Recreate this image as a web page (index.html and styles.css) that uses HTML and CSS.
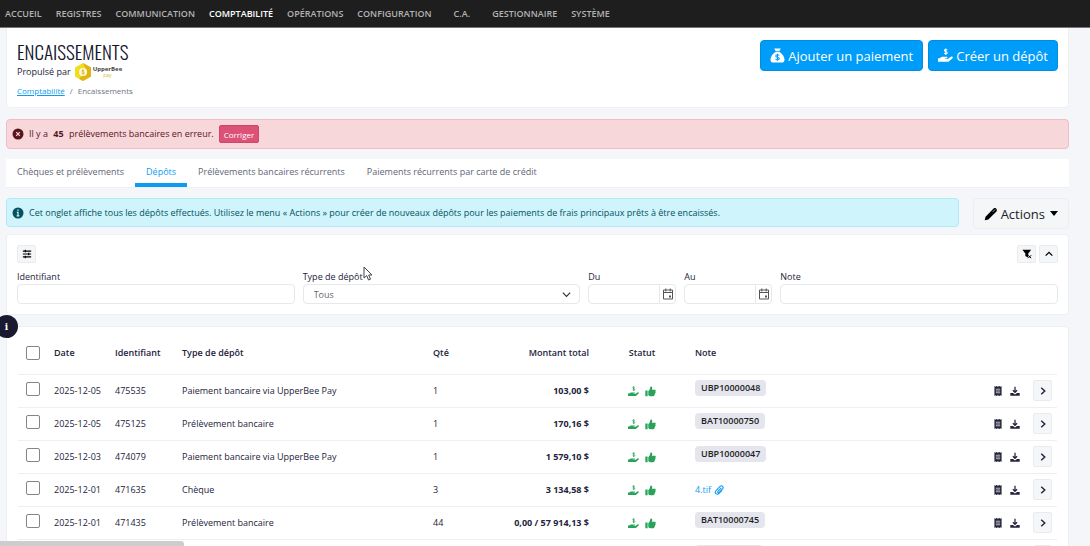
FILE: index.html
```html
<!DOCTYPE html>
<html lang="fr">
<head>
    <meta charset="UTF-8">
    <meta name="viewport" content="width=device-width, initial-scale=1.0">
    <title>Encaissements</title>
    <link rel="stylesheet" href="styles.css">
</head>
<body>

    <!-- Icons -->
    <svg class="sprite" aria-hidden="true">
        <symbol id="i-bag" viewBox="0 0 16 16">
            <path d="M4.5.5h7L9.900 3.400H6.100zM5.800 4.200h4.400C13 6 15.500 9 15.500 12.400c0 2-1.200 3.100-3.100 3.100H3.600C1.700 15.500.5 14.400.5 12.400.5 9 3 6 5.800 4.200z" fill="currentColor"/>
            <path d="M9.900 8C9.500 7.300 8.800 7.100 8 7.100c-1.100 0-1.900.5-1.900 1.300 0 2 3.900.9 3.900 2.900 0 .9-.9 1.400-2 1.400-.9 0-1.700-.3-2-1.100M8 6.100v7.600" fill="none" stroke="#009cf9" stroke-width="1.100"/>
        </symbol>
        <symbol id="i-hand" viewBox="0 0 16 16">
            <path d="M0 11h1.800l1.600-1.200c.5-.4 1-.5 1.600-.5h4.200c1.400 0 1.400 1.800 0 1.800H7.200v.5h3.300l3.300-2.300c1.300-.8 2.600.5 1.700 1.600l-3.700 3.300c-.4.4-.9.500-1.500.5H0z" fill="currentColor"/>
            <path d="M9.800 2.300C9.400 1.700 8.900 1.500 8.300 1.500c-.9 0-1.500.4-1.500 1.100 0 1.600 3.100.8 3.100 2.400 0 .8-.7 1.200-1.600 1.200-.8 0-1.300-.3-1.600-.9M8.300.4v7" fill="none" stroke="currentColor" stroke-width="1.100"/>
        </symbol>
        <symbol id="i-thumb" viewBox="0 0 16 16">
            <path d="M.5 6.500h3.300v8.500H.5zM4.800 7.200c1.500-.8 2.500-2.500 2.700-4.800C7.600 1.200 8.300.7 9 .9c1.300.3 1.700 1.700 1.400 3l-.4 1.700h3.900c2 0 2.200 2.100 1 2.700.9.8.6 2-.4 2.400.5.900 0 1.800-.8 2 .3 1.300-.5 2.100-1.700 2.100H8.400c-1.500 0-2.500-.8-3.600-1.400z" fill="currentColor"/>
        </symbol>
        <symbol id="i-receipt" viewBox="0 0 12 14">
            <path d="M1 0l1.500 1L4 0l2 1 2-1 1.500 1L11 0v14l-1.500-1L8 14l-2-1-2 1-1.500-1L1 14z" fill="currentColor"/>
            <path d="M3 4.500h6M3 7h6M3 9.500h6" stroke="#fff" stroke-width="1"/>
        </symbol>
        <symbol id="i-download" viewBox="0 0 16 16">
            <path d="M8 1v9M4.600 6.800L8 10.200l3.400-3.400" fill="none" stroke="currentColor" stroke-width="2"/>
            <path d="M.5 11h4.300L8 13.500l3.200-2.500h4.300v4.500H.5z" fill="currentColor"/>
        </symbol>
        <symbol id="i-right" viewBox="0 0 10 14">
            <path d="M2.500 2.500L7.500 7l-5 4.500" fill="none" stroke="currentColor" stroke-width="2"/>
        </symbol>
        <symbol id="i-up" viewBox="0 0 12 12">
            <path d="M2 8l4-4 4 4" fill="none" stroke="currentColor" stroke-width="1.500"/>
        </symbol>
        <symbol id="i-sliders" viewBox="0 0 12 12">
            <path d="M1 2.500h10M1 6h10M1 9.500h10M4 1v3M8 4.500v3M4 8v3" fill="none" stroke="currentColor" stroke-width="1.400"/>
        </symbol>
        <symbol id="i-filter" viewBox="0 0 12 12">
            <path d="M.5 1h10.500L7.500 5.500V10.500L4 8.500v-3z" fill="currentColor"/>
            <path d="M7.500 7.500l3.500 3.500M11 7.500L7.500 11" stroke="currentColor" stroke-width="1.200"/>
        </symbol>
        <symbol id="i-calendar" viewBox="0 0 12 12">
            <path d="M1.500 2h9v9h-9zM1.500 4.500h9M3.800.5v3M8.200.5v3" fill="none" stroke="currentColor"/>
            <path d="M7 7.500h2v2H7z" fill="currentColor"/>
        </symbol>
        <symbol id="i-pencil" viewBox="0 0 16 16">
            <path d="M.8 15.200l1-4.200L11 1.800c1.800-1.800 5 1.200 3.200 3.200L5 14.200z" fill="currentColor"/>
            <path d="M10 5.600l2.800-2.800" stroke="#fff" stroke-width=".7"/>
        </symbol>
        <symbol id="i-clip" viewBox="0 0 12 12">
            <path d="M8.800 3.400L4.700 7.700c-.9 1 .5 2.200 1.400 1.300l4.200-4.400c2-2.300-1-4.900-3-2.900L2.500 6.600c-2.500 2.900 1 6 3.600 3.500l3.500-3.700" fill="none" stroke="currentColor" stroke-width="1.300"/>
        </symbol>
    </svg>

    <nav class="navbar">
        <a href="#">ACCUEIL</a>
        <a href="#">REGISTRES</a>
        <a href="#">COMMUNICATION</a>
        <a href="#" class="active">COMPTABILITÉ</a>
        <a href="#">OPÉRATIONS</a>
        <a href="#">CONFIGURATION</a>
        <a href="#" class="short">C.A.</a>
        <a href="#">GESTIONNAIRE</a>
        <a href="#">SYSTÈME</a>
    </nav>

    <main class="content">

        <header class="card page-header">
            <div>
                <h1>ENCAISSEMENTS</h1>
                <div class="powered">
                    <span>Propulsé par</span>
                    <svg class="hexagon" viewBox="0 0 16 18" aria-hidden="true">
                        <path d="M8 0l8 4.500v9L8 18l-8-4.500v-9z" fill="#f3dc1c"/>
                        <path d="M8 0l8 4.500v9L8 18l-4-2.200L12 9z" fill="#dfb414"/>
                        <circle cx="8" cy="9" r="4" fill="#fffbe0"/>
                        <path d="M9.400 7.700c-.8-1-2.800-.6-2.600.4.200 1 2.600.7 2.600 1.800 0 1-2 1.200-2.800.3M8 6.200v5.600" fill="none" stroke="#d9b010" stroke-width=".8"/>
                    </svg>
                    <span class="brand">UpperBee<small>pay</small></span>
                </div>
                <nav class="breadcrumb">
                    <a href="#">Comptabilité</a>
                    <span>/</span>
                    <span>Encaissements</span>
                </nav>
            </div>
            <div class="header-buttons">
                <button class="btn-primary"><svg><use href="#i-bag"/></svg>Ajouter un paiement</button>
                <button class="btn-primary"><svg><use href="#i-hand"/></svg>Créer un dépôt</button>
            </div>
        </header>

        <div class="alert alert-danger">
            <svg viewBox="0 0 12 12"><circle cx="6" cy="6" r="5.500" fill="#58151c"/><path d="M4.200 4.200l3.600 3.600M7.800 4.200L4.200 7.800" stroke="#f8d7da" stroke-width="1.200"/></svg>
            <span>Il y a <strong>45</strong> prélèvements bancaires en erreur.</span>
            <button class="btn-fix">Corriger</button>
        </div>

        <nav class="tabs">
            <a href="#">Chèques et prélèvements</a>
            <a href="#" class="active">Dépôts</a>
            <a href="#">Prélèvements bancaires récurrents</a>
            <a href="#">Paiements récurrents par carte de crédit</a>
        </nav>

        <div class="info-row">
            <div class="alert alert-info">
                <svg viewBox="0 0 12 12"><circle cx="6" cy="6" r="5.500" fill="#055160"/><path d="M6 2.500v1.500M4.800 5.300H6v3.200M4.600 8.800h2.800" fill="none" stroke="#cff4fc" stroke-width="1.200"/></svg>
                <span>Cet onglet affiche tous les dépôts effectués. Utilisez le menu « Actions » pour créer de nouveaux dépôts pour les paiements de frais principaux prêts à être encaissés.</span>
            </div>
            <button class="btn-actions"><svg><use href="#i-pencil"/></svg>Actions<span class="caret"></span></button>
        </div>

        <section class="card filters">
            <div class="filter-tools">
                <button class="btn-icon" aria-label="Colonnes"><svg><use href="#i-sliders"/></svg></button>
                <button class="btn-icon push" aria-label="Effacer les filtres"><svg><use href="#i-filter"/></svg></button>
                <button class="btn-icon" aria-label="Réduire"><svg><use href="#i-up"/></svg></button>
            </div>
            <form class="filter-grid">
                <div class="field">
                    <label for="identifiant">Identifiant</label>
                    <input type="text" id="identifiant">
                </div>
                <div class="field">
                    <label for="type">Type de dépôt</label>
                    <div class="select-wrap">
                        <select id="type"><option>Tous</option></select>
                        <svg viewBox="0 0 12 12"><path d="M2 4l4 4 4-4" fill="none" stroke="#333" stroke-width="1.300"/></svg>
                    </div>
                </div>
                <div class="field">
                    <label for="du">Du</label>
                    <div class="date">
                        <input type="text" id="du">
                        <button type="button" aria-label="Choisir une date"><svg><use href="#i-calendar"/></svg></button>
                    </div>
                </div>
                <div class="field">
                    <label for="au">Au</label>
                    <div class="date">
                        <input type="text" id="au">
                        <button type="button" aria-label="Choisir une date"><svg><use href="#i-calendar"/></svg></button>
                    </div>
                </div>
                <div class="field">
                    <label for="note">Note</label>
                    <input type="text" id="note">
                </div>
            </form>
        </section>

        <section class="card deposits">
            <table>
                <thead>
                    <tr>
                        <th class="col-check"><input type="checkbox" aria-label="Tout sélectionner"></th>
                        <th class="col-date">Date</th>
                        <th class="col-id">Identifiant</th>
                        <th class="col-type">Type de dépôt</th>
                        <th class="col-qty">Qté</th>
                        <th class="col-amount">Montant total</th>
                        <th class="col-status">Statut</th>
                        <th>Note</th>
                        <th class="col-actions"></th>
                    </tr>
                </thead>
                <tbody id="rows"></tbody>
            </table>
        </section>
    </main>

    <button class="help" aria-label="Aide">i</button>
    <div class="status-bar"></div>
    <svg class="cursor" viewBox="0 0 10 15" aria-hidden="true"><path d="M1 1v11l2.700-2.400L5.500 14l2-.8-1.800-4.200H9z" fill="#fff" stroke="#444"/></svg>

    <script>
        var deposits = [
            ['2025-12-05', '475535', 'Paiement bancaire via UpperBee Pay', '1', '103,00 $', 'UBP10000048'],
            ['2025-12-05', '475125', 'Prélèvement bancaire', '1', '170,16 $', 'BAT10000750'],
            ['2025-12-03', '474079', 'Paiement bancaire via UpperBee Pay', '1', '1 579,10 $', 'UBP10000047'],
            ['2025-12-01', '471635', 'Chèque', '3', '3 134,58 $', '4.tif'],
            ['2025-12-01', '471435', 'Prélèvement bancaire', '44', '0,00 / 57 914,13 $', 'BAT10000745'],
            ['', '', '', '', '', '']
        ];

        function icon(name) {
            return '<svg><use href="#i-' + name + '"/></svg>';
        }

        var html = "";
        for (var i = 0; i < deposits.length; i++) {
            var d = deposits[i];
            var note = '<span class="badge">' + d[5] + '</span>';
            if (d[5].indexOf('.') > 0) {
                note = '<a href="#" class="file">' + d[5] + icon('clip') + '</a>';
            }
            html += '<tr><td class="col-check"><input type="checkbox" aria-label="' + d[1] + '"></td>';
            html += '<td>' + d[0] + '</td><td>' + d[1] + '</td><td>' + d[2] + '</td><td>' + d[3] + '</td>';
            html += '<td class="col-amount">' + d[4] + '</td>';
            html += '<td class="col-status">' + icon('hand') + icon('thumb') + '</td>';
            html += '<td>' + note + '</td>';
            html += '<td class="col-actions"><div class="row-actions">' + icon('receipt') + icon('download');
            html += '<button class="btn-row" aria-label="Ouvrir">' + icon('right') + '</button></div></td></tr>';
        }
        document.getElementById('rows').innerHTML = html;
    </script>

</body>
</html>
```
FILE: styles.css
```css
* {
    box-sizing: border-box;
}

body {
    margin: 0;
    height: 100vh;
    overflow: hidden;
    background-color: #f4f6f9;
    color: #23233c;
    font-family: "Open Sans", "Noto Sans", sans-serif;
    font-size: 9px;
    line-height: 14px;
}

button, input, select {
    font-family: inherit;
    font-size: inherit;
    color: inherit;
}

button {
    cursor: pointer;
}

.sprite {
    display: none;
}

.navbar {
    display: flex;
    align-items: center;
    gap: 14px;
    height: 28px;
    padding: 0 5px;
    background-color: #1e1e1e;
    border-bottom: 1px solid #777;
    font-weight: 600;
}

.navbar a {
    color: #b4b2b4;
    text-decoration: none;
}

.navbar a.active {
    color: #fff;
}

.navbar .short {
    padding: 0 8px;
}

.content {
    padding: 0 21px 0 6px;
}

.card {
    background-color: #fff;
    border: 1px solid #edf0f3;
    border-radius: 4px;
}

/* Page header */
.page-header {
    display: flex;
    justify-content: space-between;
    padding: 12px 10px 9px;
    border-top: none;
    border-radius: 0 0 4px 4px;
}

h1 {
    margin: 0;
    font-family: Oswald, "Open Sans Condensed", "Roboto Condensed", Roboto, sans-serif;
    font-size: 19px;
    font-weight: 300;
    line-height: 23px;
    color: #14142d;
}

.powered {
    display: flex;
    align-items: center;
    gap: 4px;
    height: 18px;
    font-size: 9px;
}

.hexagon {
    width: 16px;
    height: 18px;
}

.brand {
    display: flex;
    flex-direction: column;
    margin-left: -2px;
    font-size: 6px;
    font-weight: bold;
    line-height: 6px;
    color: #444;
}

.brand small {
    align-self: center;
    font-size: 5px;
    font-weight: normal;
    color: #e3b62a;
}

.breadcrumb {
    display: flex;
    gap: 5px;
    margin-top: 3px;
    color: #6f7485;
    font-size: 8px;
}

.breadcrumb a {
    color: #0c9bef;
}

.header-buttons {
    display: flex;
    align-items: flex-start;
    gap: 5px;
}

.btn-primary {
    display: flex;
    align-items: center;
    gap: 3px;
    height: 31px;
    padding: 0 9px;
    background-color: #009cf9;
    border: 1px solid #008de2;
    border-radius: 4px;
    color: #fff;
    font-size: 13px;
}

.btn-primary svg {
    width: 15px;
    height: 15px;
}

/* Alerts */
.alert {
    display: flex;
    align-items: center;
    gap: 5px;
    padding: 0 5px;
    border: 1px solid;
    border-radius: 4px;
}

.alert svg {
    width: 12px;
    height: 12px;
}

.alert-danger {
    height: 30px;
    margin-top: 11px;
    background-color: #f8d7da;
    border-color: #f1bcc3;
    color: #58151c;
}

.alert-danger strong {
    margin: 0 3px;
}

.btn-fix {
    height: 18px;
    padding: 0 4px;
    background-color: #dc5277;
    border: 1px solid #cf466b;
    border-radius: 2px;
    color: #fff;
    font-size: 8px;
}

.alert-info {
    flex: 1;
    height: 29px;
    background-color: #cff4fc;
    border-color: #b0e9f4;
    color: #055160;
}

.info-row {
    display: flex;
    gap: 14px;
    margin-top: 10px;
}

.btn-actions {
    display: flex;
    align-items: center;
    gap: 3px;
    height: 31px;
    padding: 0 10px;
    background-color: #f5f6f8;
    border: 1px solid #eceef1;
    border-radius: 4px;
    font-size: 13px;
    color: #222;
}

.btn-actions svg {
    width: 14px;
    height: 14px;
    color: #000;
}

.caret {
    margin-left: 2px;
    border: 4px solid transparent;
    border-top: 5px solid #000;
    border-bottom: none;
}

/* Tabs */
.tabs {
    display: flex;
    height: 29px;
    margin-top: 10px;
    background-color: #fff;
    border-bottom: 1px solid #edf0f3;
}

.tabs a {
    padding: 6px 11px;
    color: #5f6577;
    text-decoration: none;
}

.tabs a.active {
    color: #0c9bef;
    border-bottom: 4px solid #0c9bef;
}

/* Filters */
.filters {
    margin-top: 5px;
    padding: 10px;
}

.info-row .alert {
    align-self: flex-start;
}

.filter-tools {
    display: flex;
    gap: 3px;
}

.btn-icon {
    display: flex;
    align-items: center;
    justify-content: center;
    width: 19px;
    height: 18px;
    padding: 0;
    background-color: #f5f6f8;
    border: 1px solid #e9ebee;
    border-radius: 2px;
    color: #000;
}

.btn-icon svg {
    width: 10px;
    height: 10px;
}

.push {
    margin-left: auto;
}

.filter-grid {
    display: grid;
    grid-template-columns: 278fr 278fr 88px 88px 278fr;
    gap: 8px;
    margin-top: 7px;
}

.field label {
    display: block;
    line-height: 14px;
}

.field input, .field select {
    display: block;
    width: 100%;
    height: 20px;
    padding: 0 10px;
    background-color: #fff;
    border: 1px solid #e6e8ec;
    border-radius: 4px;
    color: #666;
    appearance: none;
}

.select-wrap {
    display: grid;
    align-items: center;
}

.select-wrap select, .select-wrap svg {
    grid-area: 1 / 1;
}

.select-wrap svg {
    justify-self: end;
    width: 11px;
    height: 11px;
    margin-right: 8px;
    pointer-events: none;
}

.date {
    display: flex;
}

.date input {
    flex: 1;
    min-width: 0;
    border-radius: 4px 0 0 4px;
}

.date button {
    display: flex;
    align-items: center;
    justify-content: center;
    width: 16px;
    padding: 0;
    background-color: #fff;
    border: 1px solid #e6e8ec;
    border-left: none;
    border-radius: 0 4px 4px 0;
    color: #555;
}

.date svg {
    width: 12px;
    height: 12px;
}

/* Deposits table */
.deposits {
    margin-top: 11px;
    padding: 6px 11px;
}

table {
    width: 100%;
    table-layout: fixed;
    border-collapse: collapse;
}

th, td {
    height: 33px;
    padding: 0 8px;
    text-align: left;
    white-space: nowrap;
    border-bottom: 1px solid #edf0f3;
}

th {
    height: 41px;
    font-weight: 600;
}

.col-check {
    width: 28px;
}

.col-date {
    width: 61px;
}

.col-id {
    width: 67px;
}

.col-type {
    width: 251px;
}

.col-qty {
    width: 50px;
}

.col-amount {
    width: 122px;
    text-align: right;
}

td.col-amount {
    font-weight: bold;
}

.col-status {
    width: 90px;
    text-align: center;
}

.col-actions {
    width: 90px;
    padding-right: 5px;
}

.col-status svg {
    width: 11px;
    height: 11px;
    margin: 0 3px;
    color: #27a35a;
    vertical-align: middle;
}

.deposits input {
    display: block;
    appearance: none;
    width: 14px;
    height: 14px;
    margin: 0;
    background-color: #fff;
    border: 1px solid #858585;
    border-radius: 2px;
}

.deposits td input {
    margin-bottom: 4px;
}

.badge {
    display: inline-block;
    min-width: 68px;
    min-height: 16px;
    margin-bottom: 6px;
    padding: 1px 6px;
    background-color: #e4e5ed;
    border-radius: 4px;
    font-weight: 600;
    color: #222;
    vertical-align: middle;
}

.file {
    display: flex;
    align-items: center;
    gap: 3px;
    color: #0c9bef;
    text-decoration: none;
}

.file svg {
    width: 10px;
    height: 10px;
}

.row-actions {
    display: flex;
    align-items: center;
    justify-content: flex-end;
    gap: 7px;
}

.row-actions svg {
    width: 10px;
    height: 10px;
}

.btn-row {
    display: flex;
    align-items: center;
    justify-content: center;
    width: 19px;
    height: 21px;
    margin-left: 6px;
    padding: 0;
    background-color: #f5f6f8;
    border: 1px solid #e9ebee;
    border-radius: 2px;
}

/* Overlays */
.help {
    position: absolute;
    top: 315px;
    left: -5px;
    width: 23px;
    height: 23px;
    padding: 0;
    background-color: #191930;
    border: none;
    border-radius: 50%;
    color: #fff;
    font-family: "DejaVu Serif", serif;
    font-weight: bold;
}

.status-bar {
    position: absolute;
    bottom: 0;
    left: 0;
    width: 184px;
    height: 5px;
    background-color: #cdcdcd;
    border-radius: 0 3px 0 0;
}

.cursor {
    position: absolute;
    top: 266px;
    left: 363px;
    width: 10px;
    height: 15px;
}
```
